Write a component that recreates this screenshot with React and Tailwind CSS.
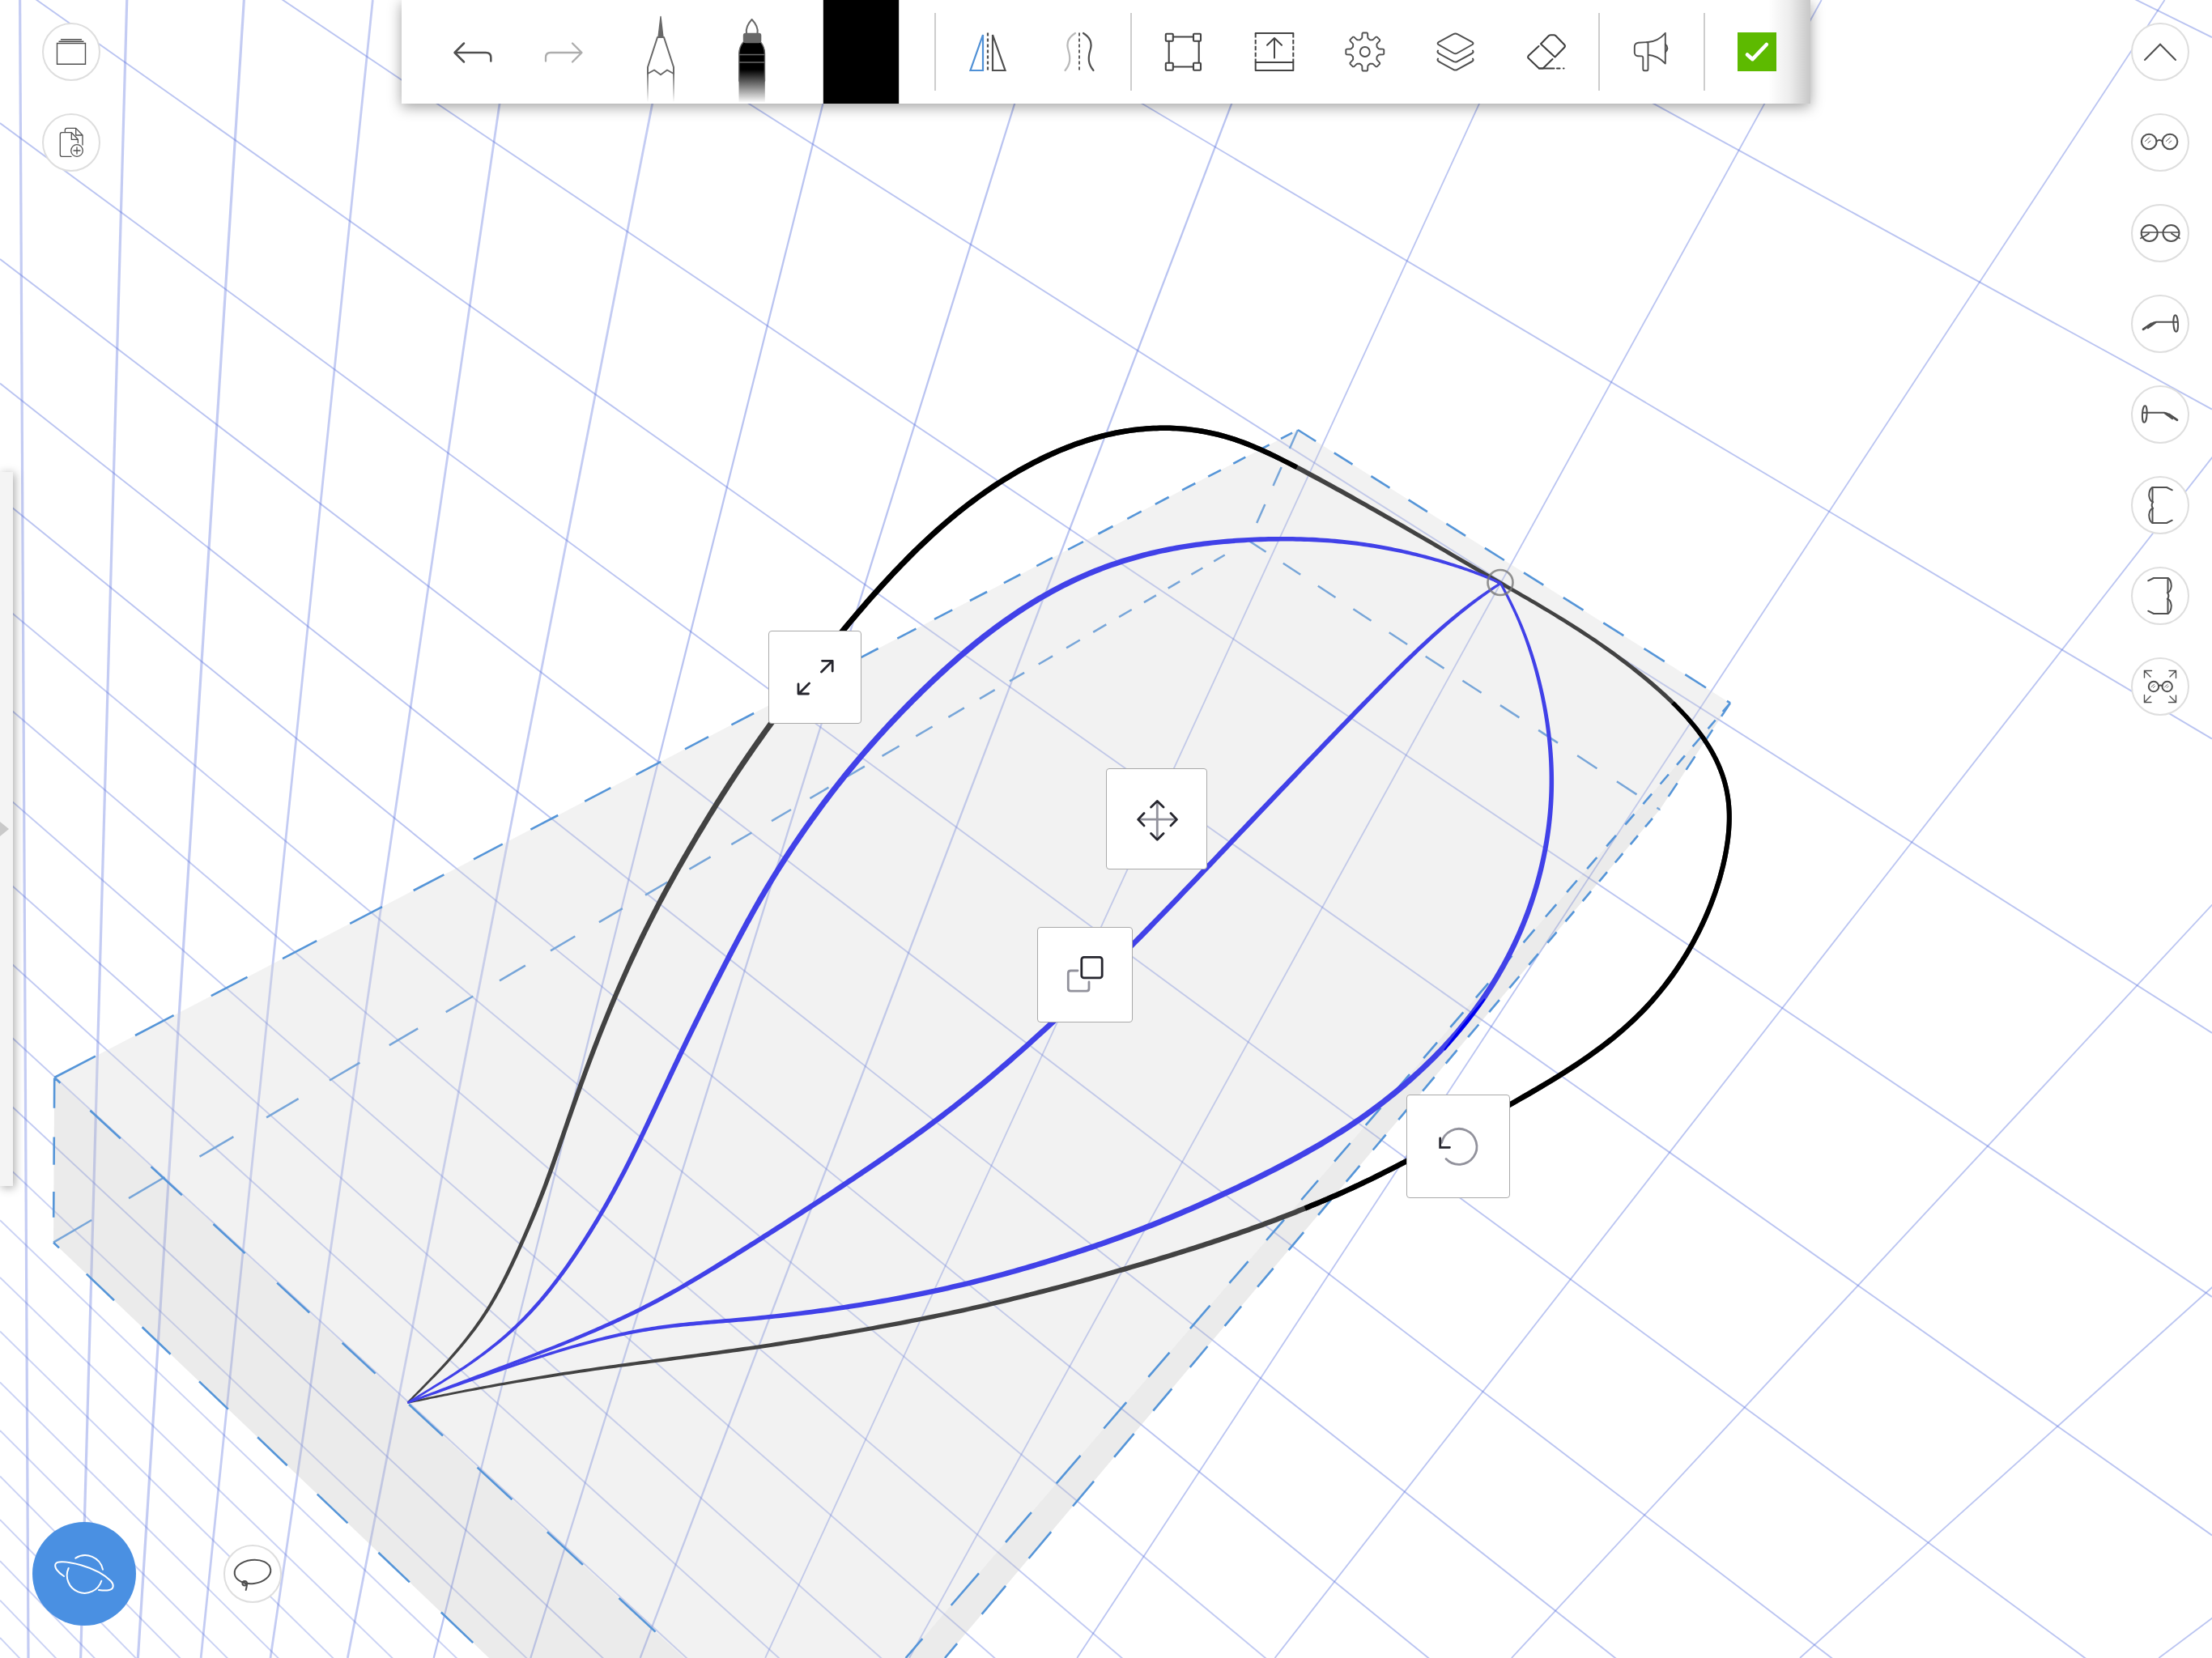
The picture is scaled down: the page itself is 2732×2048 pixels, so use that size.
import React from "react";

const W = 2732;
const H = 2048;

/* ---------- geometry helpers ---------- */

// Position of the k-th step of an evenly spaced scale seen in perspective.
const proj = (a, b, c, k) => (a + b * k) / (1 + c * k);

const range = (from, to) => Array.from({ length: to - from + 1 }, (_, i) => from + i);

const verticals = range(0, 18).map((i) => ({
  x1: proj(24.6, 125.37, -0.04318, i),
  y1: 0,
  x2: proj(35, 60.33, -0.043165, i),
  y2: H,
  w: i < 3 ? 3.2 : i < 6 ? 2.8 : i < 9 ? 2.3 : 1.8,
  o: i < 6 ? 0.36 : 0.42,
}));

const horizontals = range(-6, 40).map((j) => ({
  x1: 0,
  y1: proj(-32, 191.48, 0.04848, j),
  x2: 2000,
  y2: proj(1379.7, 323.8, 0.0486, j),
  o: j < 5 ? 0.42 : j < 12 ? 0.38 : 0.32,
}));

// Dashes that shrink with distance along the edge p-q.
function dashes([x0, y0], [x1, y1], axis, a, b, c, k0, k1) {
  const at = (k) => {
    const v = proj(a, b, c, k);
    let t = axis === "x" ? (v - x0) / (x1 - x0) : (v - y0) / (y1 - y0);
    t = Math.max(0, Math.min(1, t));
    return `${(x0 + (x1 - x0) * t).toFixed(1)} ${(y0 + (y1 - y0) * t).toFixed(1)}`;
  };
  let d = "";
  for (let k = k0; k <= k1; k++) d += `M${at(k)}L${at(k + 0.5)}`;
  return d;
}

// Catmull-Rom sampling of [x, y, width] knots, n samples per span.
function sample(p, n, from = 0, to = p.length - 1) {
  const out = [];
  const get = (i) => p[Math.max(0, Math.min(p.length - 1, i))];
  for (let s = Math.round(from * n); s <= Math.round(to * n); s++) {
    const i = Math.min(Math.floor(s / n), p.length - 2);
    const t = s / n - i;
    const [a, b, c, d] = [get(i - 1), get(i), get(i + 1), get(i + 2)];
    out.push(
      [0, 1].map(
        (m) =>
          0.5 *
          (2 * b[m] +
            (c[m] - a[m]) * t +
            (2 * a[m] - 5 * b[m] + 4 * c[m] - d[m]) * t * t +
            (3 * b[m] - a[m] - 3 * c[m] + d[m]) * t * t * t)
      ).concat(b[2] + (c[2] - b[2]) * t)
    );
  }
  return out;
}

const SIGMA = 3.6;
const KERNEL = (() => {
  const k = range(-12, 12).map((i) => Math.exp((-i * i) / (2 * SIGMA * SIGMA)));
  const sum = k.reduce((a, b) => a + b, 0);
  return k.map((v) => v / sum);
})();

// Gaussian blur of a polyline; both ends stay fixed through point reflection.
function blur(p) {
  const last = p.length - 1;
  const get = (i, m) => {
    if (i < 0) return 2 * p[0][m] - p[Math.min(-i, last)][m];
    if (i > last) return 2 * p[last][m] - p[Math.max(2 * last - i, 0)][m];
    return p[i][m];
  };
  return p.map((q, i) => [0, 1].map((m) => KERNEL.reduce((acc, k, o) => acc + k * get(i + o - 12, m), 0)));
}

// Fair curve through the knots, 4 points per knot span.
function fair(knots) {
  const dense = sample(knots, 4);
  const s1 = blur(dense);
  const residual = dense.map((q, i) => [q[0] - s1[i][0], q[1] - s1[i][1]]);
  const s2 = blur(residual);
  return dense.map((q, i) => [s1[i][0] + s2[i][0], s1[i][1] + s2[i][1], q[2] * 1.08]);
}

function ribbon(curve, from = 0, to = (curve.length - 1) / 4) {
  const s = sample(curve, 4, from * 4, to * 4);
  const l = [];
  const r = [];
  s.forEach(([x, y, w], i) => {
    const a = s[Math.max(0, i - 1)];
    const b = s[Math.min(s.length - 1, i + 1)];
    const len = Math.hypot(b[0] - a[0], b[1] - a[1]) || 1;
    const nx = (-(b[1] - a[1]) / len) * (w / 2);
    const ny = ((b[0] - a[0]) / len) * (w / 2);
    l.push(`${(x + nx).toFixed(2)} ${(y + ny).toFixed(2)}`);
    r.push(`${(x - nx).toFixed(2)} ${(y - ny).toFixed(2)}`);
  });
  return `M${l.join("L")}L${r.reverse().join("L")}Z`;
}

/* ---------- drawing data ---------- */

const T = [1603, 531];
const R = [2137, 868.4];
const R2 = [2050, 1000];
const L = [67.2, 1331];
const L2 = [66, 1534.7];
const B = [1542.5, 668];
const FRONT = [844.7, 2048];
const FRONT2 = [604, 2048];
const SIDE = [1118.6, 2048];
const SIDE2 = [1167, 2048];

const solidEdges = [
  dashes(L, T, "x", 67.2, 105.2, 0.0323, 0, 28),
  dashes(L, FRONT, "x", 111.4, 73.1, -0.01116, -1, 9),
  dashes(L2, FRONT2, "x", 106.8, 66.8, -0.01138, -1, 7),
  dashes(L, L2, "y", 1331.6, 129, 0.04, 0, 2),
  dashes(T, R, "x", 1647.8, 34.35, -0.00664, -1, 10),
  dashes(R, R2, "y", 868.4, 33, 0, 0, 4),
  dashes(R, SIDE, "y", 1412, 6.84, -0.02686, -18, 10),
  dashes(R2, SIDE2, "y", 1401.6, 3.65, -0.024, -15, 12),
];

const hiddenEdges = [
  dashes(L2, B, "x", 66, 97.96, 0.0312, 0, 28),
  dashes(B, R2, "x", 1542.5, 30.26, -0.0076, 0, 11),
  dashes(T, B, "y", 531, 46, 0, 0, 2),
];

const outline = fair([
  [503.4, 1732.7, 2.2], [551, 1685, 3], [591.3, 1634.8, 3.6], [617, 1592, 4], [643, 1536.8, 4.4],
  [668.7, 1478, 4.8], [688.8, 1422.4, 5], [717.5, 1337.5, 5.3], [752, 1249.3, 5.6], [789.3, 1164.4, 5.9],
  [826.6, 1092.6, 6.1], [866.8, 1024, 6.3], [900, 971, 6.4], [951.4, 893, 6.5], [1041, 778.5, 6.4],
  [1099, 714, 6.4], [1165.3, 647, 6.3], [1231.6, 598, 6.2], [1298, 561.6, 6.2], [1364, 537.4, 6.1],
  [1433, 528, 6], [1497, 535, 5.9], [1546.7, 551.4, 5.8], [1600.5, 577, 5.5], [1662.7, 610.7, 5.2],
  [1729, 647.7, 4.9], [1795.4, 686.6, 4.6], [1853.4, 721, 4.3], [1919.7, 758.7, 4.3], [1986, 801.4, 4.5],
  [2044, 848.6, 4.7], [2085.5, 888, 5], [2114.6, 929.6, 5.3], [2131, 971, 5.4], [2136, 1015.7, 5.5],
  [2127, 1073, 5.6], [2106.3, 1133.7, 5.7], [2073, 1194.3, 5.8], [2027.5, 1251.7, 5.9], [1973.6, 1296.3, 6],
  [1911.5, 1336.5, 6], [1865, 1364, 6], [1737.9, 1434.5, 6], [1676, 1464.6, 6], [1612, 1491.8, 6],
  [1548.5, 1517, 5.9], [1472, 1542.3, 5.8], [1382.7, 1569.5, 5.6], [1306, 1590, 5.4], [1216.8, 1612.5, 5.2],
  [1127.6, 1631.5, 5], [1000, 1654, 4.7], [900, 1669.3, 4.3], [798, 1682.4, 3.9], [700, 1695.5, 3.5],
  [602.8, 1713, 3], [539.6, 1725, 2.5], [503.4, 1732.7, 2.2],
]);

const upper = fair([
  [503.4, 1732.7, 2.2], [556.8, 1700, 2.9], [608.5, 1664, 3.5], [654.4, 1621.6, 4], [694.6, 1572.6, 4.4],
  [740.5, 1503.3, 4.8], [775, 1438.7, 5.1], [803.7, 1380, 5.4], [832.4, 1318, 5.7], [866.8, 1247.8, 6],
  [900, 1183, 6.2], [930, 1127, 6.4], [966.3, 1064.8, 6.5], [1016, 994, 6.6], [1065.8, 930.8, 6.7],
  [1123.8, 869.3, 6.8], [1181.9, 813.5, 6.8], [1239.9, 768.3, 6.7], [1298, 731.3, 6.6], [1360, 702.3, 6.4],
  [1430.6, 681, 6.1], [1505, 669.7, 5.7], [1588, 665.6, 5.2], [1662.7, 669.4, 4.7], [1729, 680.3, 4.2],
  [1787, 695.6, 3.7], [1828.5, 709.6, 3.2], [1853.4, 720.4, 2.8],
]);

const middle = fair([
  [1853.4, 720.4, 2.8], [1824.4, 740.2, 3.7], [1778.8, 776.6, 4.3], [1729, 824.4, 4.8], [1671, 883, 5.2],
  [1579.8, 978, 5.7], [1488.6, 1073, 6], [1399, 1167.5, 6.2], [1302, 1261.3, 6.3], [1215, 1337.8, 6.3],
  [1148.7, 1388.8, 6.2], [1082.4, 1436.6, 6.1], [1000, 1491, 5.9], [941, 1529, 5.7], [900, 1554.4, 5.4],
  [838, 1592.3, 5], [786.5, 1619.7, 4.6], [717.6, 1651, 4.1], [643, 1680, 3.5], [574, 1705.6, 2.8],
  [503.4, 1732.7, 2.2],
]);

const lower = fair([
  [1853.4, 720.4, 2.8], [1874, 760.3, 3.3], [1895, 818, 3.9], [1909, 881.8, 4.5], [1916.4, 950, 5],
  [1913, 1017.7, 5.4], [1899, 1092, 5.8], [1872, 1162.4, 6.1], [1835, 1229.4, 6.4], [1787, 1290, 6.5],
  [1729, 1344, 6.6], [1671, 1387.6, 6.7], [1604.7, 1428.8, 6.7], [1501, 1480, 6.6], [1411.4, 1517.5, 6.5],
  [1350.8, 1539, 6.4], [1280.6, 1562, 6.2], [1204, 1583, 6], [1114.8, 1603, 5.8], [1000, 1622, 5.4],
  [900, 1631.4, 4.7], [838, 1636.5, 4.3], [775, 1646.5, 3.9], [700, 1665.4, 3.4], [620, 1691.5, 2.8],
  [503.4, 1732.7, 2.2],
]);

const pts = (...p) => p.map((q) => q.join(",")).join(" ");

function Scene() {
  return (
    <svg className="absolute inset-0" width={W} height={H} viewBox={`0 0 ${W} ${H}`} fill="none">
      <g stroke="#5b73de">
        {verticals.map((l, i) => (
          <line key={i} x1={l.x1} y1={l.y1} x2={l.x2} y2={l.y2} strokeWidth={l.w} strokeOpacity={l.o} />
        ))}
        {horizontals.map((l, i) => {
          const s = (l.y2 - l.y1) / (l.x2 - l.x1);
          return <line key={i} x1={0} y1={l.y1} x2={W} y2={l.y1 + s * W} strokeWidth={1.9} strokeOpacity={l.o} />;
        })}
      </g>
      <polygon points={pts(T, R, SIDE, FRONT, L)} fill="#d4d4d4" fillOpacity="0.3" />
      <polygon points={pts(R, R2, SIDE2, SIDE)} fill="#bcbcbc" fillOpacity="0.3" />
      <polygon points={pts(L, FRONT, FRONT2, L2)} fill="#bcbcbc" fillOpacity="0.3" />
      <path d={hiddenEdges.join("")} stroke="#78a6d9" strokeWidth="2.5" />
      <path d={solidEdges.join("")} stroke="#5595d8" strokeWidth="2.6" />
      <path d={ribbon(outline)} fill="#424242" />
      <path d={ribbon(outline, 14, 23)} fill="#000" />
      <path d={ribbon(outline, 30.5, 44)} fill="#000" />
      <path d={ribbon(upper)} fill="#4141e8" />
      <path d={ribbon(middle)} fill="#4141e8" />
      <path d={ribbon(lower)} fill="#4141e8" />
      <path d="M1834 1234Q1815 1262 1784 1297Q1806 1266 1834 1234Z" fill="#0000ee" stroke="#0000ee" strokeWidth="2" />
      <circle cx="1853" cy="719.5" r="15.5" stroke="#777" strokeOpacity="0.8" strokeWidth="2.6" />
    </svg>
  );
}

/* ---------- toolbar ---------- */

const INK = "#4f4f4f";

function Tool({ x, stroke = INK, w = 2, children }) {
  return (
    <button className="h-32 w-28 shrink-0">
      <svg width="112" height="128" viewBox={`${x} 0 112 128`} fill="none" stroke={stroke} strokeWidth={w} strokeLinecap="round" strokeLinejoin="round">
        {children}
      </svg>
    </button>
  );
}

function Divider({ className }) {
  return <div className={`h-24 w-0.5 shrink-0 bg-[#cdcdcd] ${className}`} />;
}

const gearPath = (() => {
  const p = [];
  const put = (r, deg) => {
    const a = (deg * Math.PI) / 180;
    p.push(`${(1685.8 + r * Math.cos(a)).toFixed(2)} ${(64 + r * Math.sin(a)).toFixed(2)}`);
  };
  for (let i = 0; i < 8; i++) {
    const a = i * 45;
    put(17.2, a - 13);
    put(18.2, a - 11);
    put(22.8, a - 8.5);
    put(23.6, a - 6);
    put(23.6, a + 6);
    put(22.8, a + 8.5);
    put(18.2, a + 11);
    put(17.2, a + 13);
    put(16, a + 22.5);
  }
  return `M${p.join("L")}Z`;
})();

function Toolbar() {
  return (
    <div className="absolute left-[496px] top-0 flex h-32 w-[1740px] items-center bg-white pl-8 shadow-[0_4px_16px_rgba(0,0,0,0.38)]">
      <Tool x={528} w={2.5}>
        <path d="M573 53.5L561.5 65L573 76.5M562 65H600Q606.3 65 606.3 71V75.5" />
      </Tool>
      <Tool x={640} w={2.3} stroke="#adadad">
        <path d="M707 53.5L718.5 65L707 76.5M718 65H680Q674 65 674 71V75.5" />
      </Tool>
      <div className="ml-2 flex">
        <Tool x={760} stroke="#686868">
          <defs>
            <linearGradient id="shaft" gradientUnits="userSpaceOnUse" x1="0" y1="83" x2="0" y2="126">
              <stop offset="0.1" stopColor="#686868" />
              <stop offset="1" stopColor="#686868" stopOpacity="0" />
            </linearGradient>
          </defs>
          <path d="M816 20.5L813 46H819Z" fill="#686868" strokeWidth="1.4" />
          <path d="M812 46H820L832 83V91L824 86.5L816 92.3L808 86.5L800 91V83Z" />
          <path d="M799 90H801V126H799ZM831 90H833V126H831Z" fill="url(#shaft)" stroke="none" />
        </Tool>
        <Tool x={872} stroke="#686868">
          <defs>
            <linearGradient id="barrel" gradientUnits="userSpaceOnUse" x1="0" y1="86" x2="0" y2="127">
              <stop offset="0" stopColor="#000" />
              <stop offset="1" stopColor="#000" stopOpacity="0" />
            </linearGradient>
          </defs>
          <path d="M922 41Q920.5 33 928.6 24Q937 33 935.5 41" />
          <path d="M912.5 126V66Q912.8 58 918 52H939.5Q944.6 58 944.8 66V126Z" fill="url(#barrel)" stroke="none" />
          <path d="M912.8 100V66Q913 58 918 52M944.5 100V66Q944.3 58 939.5 52" strokeWidth="1.4" />
          <rect x="918.8" y="41.8" width="20.5" height="10.5" rx="2" fill="#686868" />
          <path d="M913 67.5H944M913 77H944" strokeWidth="1.7" />
        </Tool>
      </div>
      <div className="ml-[32px] h-32 w-[95px] shrink-0 border-x border-[#cfcfcf] bg-black" />
      <Divider className="ml-[43px]" />
      <div className="ml-2 flex">
        <Tool x={1164} w={2.2}>
          <path d="M1214 43V87H1198.5Z" stroke="#4f90d6" strokeLinejoin="miter" />
          <path d="M1226 43V87H1241.5Z" strokeLinejoin="miter" />
          <path d="M1220 40.5V87" strokeDasharray="4 3" strokeLinecap="butt" />
        </Tool>
        <Tool x={1276} w={2.2}>
          <path d="M1328 41C1318 47 1317 54 1319.5 62C1322.5 72 1322 79 1315.5 87" stroke="#b9b9b9" />
          <path d="M1338 41C1348 47 1349 54 1346.5 62C1343.5 72 1344 79 1350.5 87" />
          <path d="M1333 40.5V87" strokeDasharray="4 3" strokeLinecap="butt" strokeWidth="1.8" />
        </Tool>
      </div>
      <Divider className="ml-2" />
      <div className="ml-[7px] flex">
        <Tool x={1405} stroke="#434343" w={2.1}>
          <path d="M1443.7 45.5H1480.7V82.5H1443.7Z" />
          {[[1444.3, 46.3], [1478.5, 46.3], [1444.3, 82.3], [1478.5, 82.3]].map(([x, y]) => (
            <rect key={`${x}-${y}`} x={x - 4.5} y={y - 4.5} width="9" height="9" rx="1" fill="#fff" />
          ))}
        </Tool>
        <Tool x={1517} stroke="#434343" w={2}>
          <path d="M1550.7 41H1597.3M1550.7 77H1597.3V87H1550.7Z" />
          <path d="M1550.7 41V77M1597.3 41V77" strokeDasharray="5.5 2.4" strokeLinecap="butt" />
          <path d="M1574 71.5V47M1565 55.7L1574 47L1583 55.7" />
        </Tool>
        <Tool x={1629} w={1.9}>
          <path d={gearPath} />
          <circle cx="1685.8" cy="64" r="6" />
        </Tool>
        <Tool x={1741} w={2}>
          <path d="M1795 42.2Q1797.6 40.6 1800 42.2L1818.6 52.2Q1820.3 53.6 1818.6 55L1800 65.5Q1797.6 67 1795 65.5L1776.5 55Q1774.8 53.6 1776.5 52.2Z" />
          <path d="M1776 62.5Q1774.7 64.5 1777 66L1795 75.8Q1797.6 77.2 1800 75.8L1818 66Q1820.4 64.5 1819 62.5" />
          <path d="M1776 72.5Q1774.7 74.5 1777 76L1795 85.8Q1797.6 87.4 1800 85.8L1818 76Q1820.4 74.5 1819 72.5" />
        </Tool>
        <Tool x={1853} stroke="#3f3f3f" w={2.1}>
          <path d="M1903 54.3L1913 44Q1914 43.3 1915.5 43.3H1919Q1920.5 43.3 1921.5 44.3L1932.2 55.2Q1933.6 56.8 1932.2 58.5L1920.5 70.5Z" />
          <path d="M1900.5 57L1887.8 68.8Q1886.5 70.5 1887.8 72L1900.9 84.5H1905.7L1917.5 73" />
          <path d="M1901 84.5H1919.5M1923 84.5H1926.5M1931 84.5H1931.5" />
        </Tool>
      </div>
      <Divider className="ml-[9px]" />
      <div className="ml-2 flex">
        <Tool x={1984} w={1.9}>
          <path d="M2035.3 52L2023.5 52.8Q2018.8 53.5 2018.8 58V65Q2019.2 69 2023 69.2L2027.5 69.4Q2029.3 69.6 2029.3 71.5V85Q2029.3 87.3 2031 87.3H2034Q2035.5 87.3 2035.5 85V52Q2048 51 2056.8 40.8V78.5Q2047 68.5 2035.5 67.8" />
          <path d="M2056.8 54.5Q2057.5 56 2058.6 56.6Q2060 59.5 2058.6 62.3Q2057.3 63 2056.8 65" />
        </Tool>
      </div>
      <Divider className="ml-2" />
      <div className="ml-2 flex h-32 w-28 items-center justify-center">
        <button className="flex size-12 items-center justify-center bg-[#5dba00]">
          <svg width="48" height="48" viewBox="0 0 48 48" fill="none" stroke="#fff" strokeWidth="4.6" strokeLinecap="round" strokeLinejoin="round">
            <path d="M12 27.5L18.5 33.2L35.8 15" />
          </svg>
        </button>
      </div>
      <div className="pointer-events-none absolute inset-y-0 right-0 w-[52px] bg-linear-to-r from-transparent via-black/7 to-black/22" />
    </div>
  );
}

/* ---------- round buttons ---------- */

function RoundButton({ w = 2, children }) {
  return (
    <button className="flex size-[72px] shrink-0 items-center justify-center rounded-full border-2 border-[#dedede] bg-white">
      <svg className="shrink-0" width="72" height="72" viewBox="-36 -36 72 72" fill="none" stroke={INK} strokeWidth={w} strokeLinecap="round" strokeLinejoin="round">
        {children}
      </svg>
    </button>
  );
}

const SideView = () => (
  <>
    <ellipse cx="19.2" cy="-0.5" rx="2.8" ry="10.3" transform="rotate(-3 19.2 -0.5)" />
    <path d="M21 -2.3H-5Q-8 -2 -11 0L-21 6.5M-5 -2Q-9 1 -15 5.3" />
    <path d="M-11 0L-21 6.8" strokeWidth="2.8" />
  </>
);

const TopView = () => (
  <>
    <path d="M-9.5 -22H8L14.8 -18.7M-9.5 22H8L14.8 18.7M-9.5 -22V-4M-9.5 22V4" />
    <path d="M-9.5 -22Q-13.5 -20 -13.8 -12Q-13 -5 -8.8 -3.8M-9.5 22Q-13.5 20 -13.8 12Q-13 5 -8.8 3.8M-9.5 -3Q-11.3 0 -9.5 3" />
  </>
);

function ViewRail() {
  return (
    <div className="absolute right-7 top-7 flex flex-col gap-10">
      <RoundButton>
        <path d="M-19 10L0 -9.3L19 10" strokeLinejoin="miter" />
      </RoundButton>
      <RoundButton w={2.1}>
        <circle cx="-13.8" cy="-1" r="9.3" />
        <circle cx="12" cy="-1" r="9.3" />
        <path d="M-4.5 -1.5Q-1 -4.5 2.7 -1.5" />
        <path d="M-18.5 -1.5L-13.5 -6M-15 0.5L-12 -2M7.3 -1.5L12.3 -6M10.8 0.5L13.8 -2" strokeWidth="1" />
      </RoundButton>
      <RoundButton>
        <circle cx="-13.3" cy="0" r="10" />
        <circle cx="13.5" cy="0" r="10" />
        <path d="M-23 -1H23M-24 6.3Q-18 3.5 -14 0.5M24 6.3Q18 3.5 14 0.5" strokeWidth="1.7" />
      </RoundButton>
      <RoundButton>
        <SideView />
      </RoundButton>
      <RoundButton>
        <g transform="scale(-1 1)">
          <SideView />
        </g>
      </RoundButton>
      <RoundButton>
        <TopView />
      </RoundButton>
      <RoundButton>
        <g transform="scale(-1 1)">
          <TopView />
        </g>
      </RoundButton>
      <RoundButton w={1.4}>
        {[0, 90, 180, 270].map((a) => (
          <path key={a} d="M-19.5 -11V-19.5H-10.5M-19 -19L-12 -12" transform={`rotate(${a})`} strokeLinejoin="miter" />
        ))}
        <circle cx="-8" cy="0" r="6.2" strokeWidth="2" />
        <circle cx="8.7" cy="0" r="6.2" strokeWidth="2" />
        <path d="M-2 -1Q0.3 -2.2 2.5 -1" strokeWidth="2" />
        <path d="M-11 0.5L-7.5 -2.5M-8.5 1.5L-6.5 -0.5M5.7 0.5L9.2 -2.5M8.2 1.5L10.2 -0.5" strokeWidth="0.9" />
      </RoundButton>
    </div>
  );
}

function FileRail() {
  return (
    <div className="absolute left-[52px] top-7 flex flex-col gap-10">
      <RoundButton w={1.4}>
        <path d="M-17.5 -10.5H17.5V15.3H-17.5Z" strokeLinejoin="miter" />
        <path d="M-12.5 -15.3H12.5M-15 -12.7H15" />
      </RoundButton>
      <RoundButton w={1.3}>
        <path d="M0 17.3H-11.5Q-13.7 17.3 -13.7 15V-10Q-13.7 -12.3 -11.5 -12.3H0.3L8.3 -3.7V0.5M0.3 -12.3V-3.7H8.3" />
        <path d="M-7.7 -13.5V-15.5Q-7.5 -17.6 -5.5 -17.6H5.7L14 -9V3M5.7 -17.6V-9H14" />
        <circle cx="7" cy="10" r="7.3" />
        <path d="M7 6V14M3 10H11" />
      </RoundButton>
    </div>
  );
}

function BottomControls() {
  return (
    <div className="absolute bottom-10 left-10 flex items-center gap-[108px]">
      <button className="flex size-32 items-center justify-center rounded-full bg-[#4a90e2]">
        <svg width="80" height="80" viewBox="-40 -40 80 80" fill="none" stroke="#fff" strokeWidth="2" strokeLinecap="round">
          <path d="M-25 3C-33 -2 -37 -8 -35.5 -12C-34 -16 -22 -15.5 -4 -10.7C14 -5.5 27 3 33 9C37 13.5 37 19 30 20.3C26 21 22 20.5 18 20" />
          <path d="M-10.7 -19.3A22.3 22.3 0 0 1 23 -5.3M-19.3 -7A21.8 21.8 0 1 0 21.3 8.7" />
        </svg>
      </button>
      <RoundButton w={2}>
        <ellipse cx="0" cy="-2.6" rx="22.4" ry="14.6" transform="rotate(-7 0 -2.6)" />
        <circle cx="-9.8" cy="11.8" r="2.8" />
        <path d="M-12 10L-7 13.5Q-7.5 17 -8.3 20" />
      </RoundButton>
    </div>
  );
}

/* ---------- transform handles ---------- */

function Handle({ className, viewBox, children }) {
  return (
    <div className={`absolute overflow-hidden rounded-[4px] border-[1.5px] border-[#a9a9a9] bg-white ${className}`}>
      <svg className="size-full" viewBox={viewBox} fill="none" stroke="#26262e" strokeWidth="2.8" strokeLinecap="round" strokeLinejoin="round">
        {children}
      </svg>
    </div>
  );
}

const SOFT = "#92929c";

function Handles() {
  return (
    <>
      <Handle className="left-[949px] top-[779px] size-[115px]" viewBox="950 780 113 113">
        <path d="M1015.5 816.3H1028.2V829M1014.5 830L1027.5 817M986 845V857H998.5M987 856.5L999.5 844" />
      </Handle>
      <Handle className="left-[1366px] top-[949px] size-[125px]" viewBox="1367 950 123 123">
        <path d="M1407 1012.2H1452M1429.3 991V1035.5" stroke={SOFT} />
        <path d="M1413 1004.5L1405.7 1012.2L1413 1019.9M1446 1004.5L1453.4 1012.2L1446 1019.9M1421.6 997L1429.3 989.4L1437 997M1421.6 1029.5L1429.3 1037.2L1437 1029.5" />
      </Handle>
      <Handle className="left-[1281px] top-[1145px] size-[118px]" viewBox="1282 1146 116 116">
        <rect x="1335.8" y="1182.3" width="25.4" height="25.6" rx="3" />
        <path d="M1331 1199H1322.5Q1319.3 1199 1319.3 1202V1221Q1319.3 1224.2 1322.5 1224.2H1342Q1345 1224.2 1345 1221V1213" stroke={SOFT} />
      </Handle>
      <Handle className="left-[1737px] top-[1352px] size-[128px]" viewBox="1738 1353 126 126">
        <path d="M1780.5 1411.5A22 22 0 1 1 1786 1431.5" stroke={SOFT} />
        <path d="M1778.7 1406V1417.3H1790.5" strokeLinejoin="miter" />
      </Handle>
    </>
  );
}

export default function App() {
  return (
    <main className="relative h-[2048px] w-[2732px] overflow-hidden bg-white">
      <Scene />
      <Handles />
      <aside className="absolute left-0 top-[583px] flex h-[882px] w-4 items-center bg-[#f4f4f4] shadow-[2px_2px_12px_rgba(0,0,0,0.35)]">
        <svg width="12" height="18" viewBox="0 0 12 18">
          <path d="M0 0L11 9L0 18Z" fill="#c9c9c9" />
        </svg>
      </aside>
      <FileRail />
      <Toolbar />
      <ViewRail />
      <BottomControls />
    </main>
  );
}
